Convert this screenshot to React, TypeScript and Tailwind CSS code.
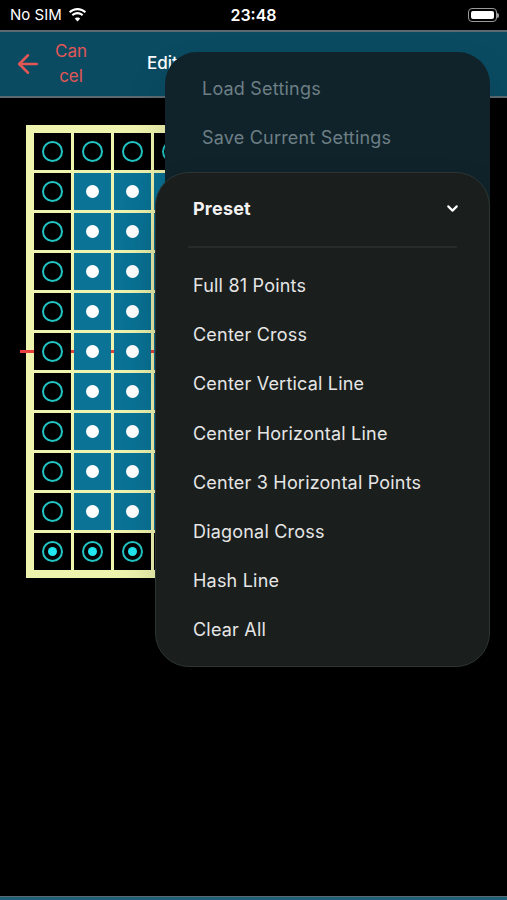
import React from 'react'
import { ArrowLeft, ChevronDown } from 'lucide-react'

const font = { fontFamily: 'Inter, "Noto Sans", sans-serif' }

const presets = [
    'Full 81 Points',
    'Center Cross',
    'Center Vertical Line',
    'Center Horizontal Line',
    'Center 3 Horizontal Points',
    'Diagonal Cross',
    'Hash Line',
    'Clear All',
]

function Cell({ kind }: { kind: 'ring' | 'dot' | 'target' }) {
    if (kind === 'dot') {
        return (
            <div className="w-[37px] h-[37px] bg-[#0a7396] flex items-center justify-center">
                <div className="w-[13px] h-[13px] rounded-full bg-white" />
            </div>
        )
    }
    return (
        <div className="w-[37px] h-[37px] bg-black flex items-center justify-center">
            <div className="w-[21px] h-[21px] rounded-full border-2 border-[#22c4c4] flex items-center justify-center">
                {kind === 'target' && <div className="w-[9px] h-[9px] rounded-full bg-[#22e6f0]" />}
            </div>
        </div>
    )
}

function Grid() {
    const rows = Array.from({ length: 11 })
    const cols = Array.from({ length: 9 })
    return (
        <div className="relative isolate bg-[#eef3ae] p-2 w-max">
            <div className="grid grid-cols-9 gap-[3px] relative z-10">
                {rows.map((_, r) =>
                    cols.map((_, c) => {
                        const kind = r === 0 ? 'ring' : r === 10 ? 'target' : c === 0 ? 'ring' : 'dot'
                        return <Cell key={`${r}-${c}`} kind={kind} />
                    })
                )}
            </div>
            {/* center line */}
            <div className="absolute left-[-6px] right-0 top-[225px] h-[3px] bg-[#e8403f] z-0" />
        </div>
    )
}

export default function App() {
    return (
        <div className="relative w-[507px] h-[900px] bg-black overflow-hidden text-white" style={font}>
            {/* status bar */}
            <div className="h-[30px] flex items-center justify-between px-[10px]">
                <div className="flex items-center gap-[6px] text-[15px] w-[120px]">
                    <span>No SIM</span>
                    <svg width="19" height="14" viewBox="0 0 19 14" fill="white">
                        <path d="M9.5 2.2c2.8 0 5.3 1.1 7.2 2.9l1.4-1.5C15.8 1.4 12.8 0.1 9.5 0.1S3.2 1.4 0.9 3.6l1.4 1.5C4.2 3.3 6.7 2.2 9.5 2.2z" />
                        <path d="M9.5 6.2c1.7 0 3.3 0.7 4.4 1.8l1.4-1.5C13.8 5 11.8 4.1 9.5 4.1S5.2 5 3.7 6.5l1.4 1.5C6.2 6.9 7.8 6.2 9.5 6.2z" />
                        <path d="M9.5 13.6l2.8-3c-0.7-0.7-1.7-1.2-2.8-1.2s-2.1 0.5-2.8 1.2z" />
                    </svg>
                </div>
                <span className="text-[16px] font-semibold">23:48</span>
                <div className="w-[120px] flex justify-end">
                    <div className="w-[29px] h-[14px] rounded-[4px] border border-[#9a9a9a] p-[2px] flex items-center relative">
                        <div className="h-full w-full bg-white rounded-[2px]" />
                        <div className="absolute right-[-3px] w-[2px] h-[5px] bg-[#9a9a9a] rounded-r" />
                    </div>
                </div>
            </div>

            {/* header */}
            <div className="h-[68px] bg-[#0a4b62] border-y-2 border-[#5a6a70] flex items-center">
                <ArrowLeft className="w-[30px] h-[30px] text-[#e25656] ml-[13px]" strokeWidth={2} />
                <div className="ml-[12px] text-[#e25656] text-[17px] leading-[25px] text-center">
                    <div>Can</div>
                    <div>cel</div>
                </div>
                <div className="ml-[60px] text-[17px] text-white font-medium">Edit Points</div>
            </div>

            {/* content */}
            <div className="pl-[26px] pt-[27px]">
                <Grid />
            </div>

            {/* bottom bar edge */}
            <div className="absolute left-0 right-0 bottom-0 h-[4px] border-t border-[#5a6a70] bg-[#1f6078]" />

            {/* back menu */}
            <div className="absolute z-20 left-[165px] top-[52px] w-[325px] h-[300px] rounded-[32px] bg-[#10232a] shadow-2xl">
                <div className="pl-[37px] pt-[23px] text-[18px] tracking-[0.2px] text-[#6d7f85] flex flex-col gap-[22px]">
                    <span>Load Settings</span>
                    <span>Save Current Settings</span>
                </div>
            </div>

            {/* front menu */}
            <div className="absolute z-30 left-[155px] top-[172px] w-[335px] h-[495px] rounded-[34px] bg-[#1a1e1d] border border-[#2c3534] shadow-2xl">
                <div className="flex items-center justify-between pl-[37px] pr-[28px] pt-[22px] pb-[24px]">
                    <span className="text-[18px] tracking-[0.2px] font-bold text-[#f2f2f2]">Preset</span>
                    <ChevronDown className="w-[17px] h-[17px] text-white" strokeWidth={3} />
                </div>
                <div className="mx-[32px] h-[2px] bg-[#262c2b]" />
                <div className="flex flex-col pl-[37px] pt-[13px]">
                    {presets.map(p => (
                        <div key={p} className="h-[49.2px] flex items-center text-[18px] tracking-[0.2px] text-[#e6e6e6]">{p}</div>
                    ))}
                </div>
            </div>
        </div>
    )
}
